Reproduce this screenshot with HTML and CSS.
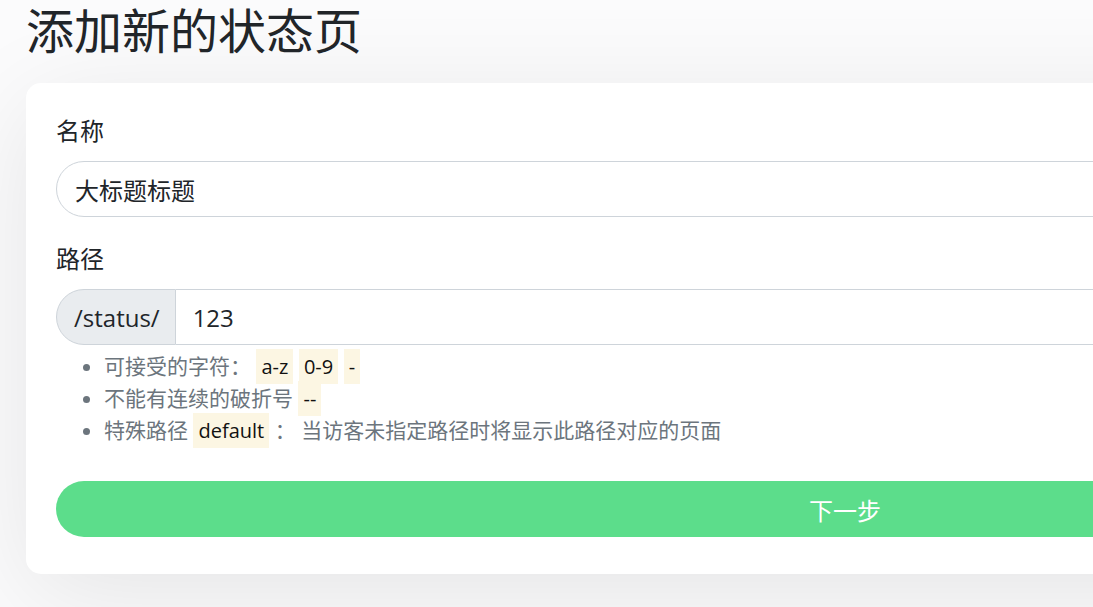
FILE: index.html
```html
<html>
    <head>
        <title>添加新的状态页</title>
        <meta name="viewport" content="width=device-width" />
        <link rel="stylesheet" href="styles.css">
    </head>
    <body>
        <div class="container">
            <h1>添加新的状态页</h1>

            <form class="card" id="form">
                <label for="name">名称</label>
                <input id="name" class="field" type="text" value="大标题标题" />

                <label for="slug" class="second">路径</label>
                <div class="group">
                    <span class="prefix">/status/</span>
                    <input id="slug" type="text" value="123" />
                </div>
                <ul class="hints">
                    <li>可接受的字符： <code>a-z</code> <code>0-9</code> <code>-</code></li>
                    <li>不能有连续的破折号 <code>--</code></li>
                    <li>特殊路径 <code>default</code> ： 当访客未指定路径时将显示此路径对应的页面</li>
                </ul>

                <button type="submit">下一步</button>
            </form>
        </div>
    </body>
</html>
```

FILE: styles.css
```css
html, body {
    margin: 0;
    overflow: hidden;
}

body {
    color: #212529;
    background: #fbfbfc;
    font-family: "Open Sans", "Noto Sans CJK SC", sans-serif;
    font-size: 24px;
    height: 607px;
}

.container {
    width: 1638px;
    padding-left: 26px;
}

h1 {
    font-weight: 400;
    font-size: 48px;
    line-height: 58px;
    margin: 2px 0 23px;
}

.card {
    display: flex;
    flex-direction: column;
    background: #fff;
    border-radius: 15px;
    box-shadow: 0 22px 105px rgba(0, 0, 0, 0.09);
    padding: 30px 30px 37px;
}

label {
    line-height: 36px;
    margin-bottom: 12px;
}

label.second {
    margin-top: 24px;
}

input {
    font: inherit;
    color: #212529;
    outline: none;
}

.field {
    height: 56px;
    box-sizing: border-box;
    border: 1px solid #ced4da;
    border-radius: 28px;
    padding: 0 18px;
}

.group {
    display: flex;
    height: 56px;
}

.prefix {
    display: flex;
    align-items: center;
    background: #e9ecef;
    border: 1px solid #ced4da;
    border-radius: 28px 0 0 28px;
    padding: 0 15px 0 17px;
}

.group input {
    flex: 1;
    border: 1px solid #ced4da;
    border-left: 0;
    padding: 0 17px;
}

.hints {
    margin: 5px 0 0;
    padding-left: 48px;
    color: #6c757d;
    font-size: 21px;
    line-height: 32px;
}

.hints li {
    height: 32px;
}

code {
    font-family: "Open Sans", sans-serif;
    font-size: 20px;
    color: #111;
    background: #fcf6e3;
    padding: 4px 5px;
}

button {
    margin-top: 35px;
    height: 56px;
    border: 0;
    border-radius: 28px;
    background: #5cdd8b;
    color: #fff;
    font: inherit;
}
```
